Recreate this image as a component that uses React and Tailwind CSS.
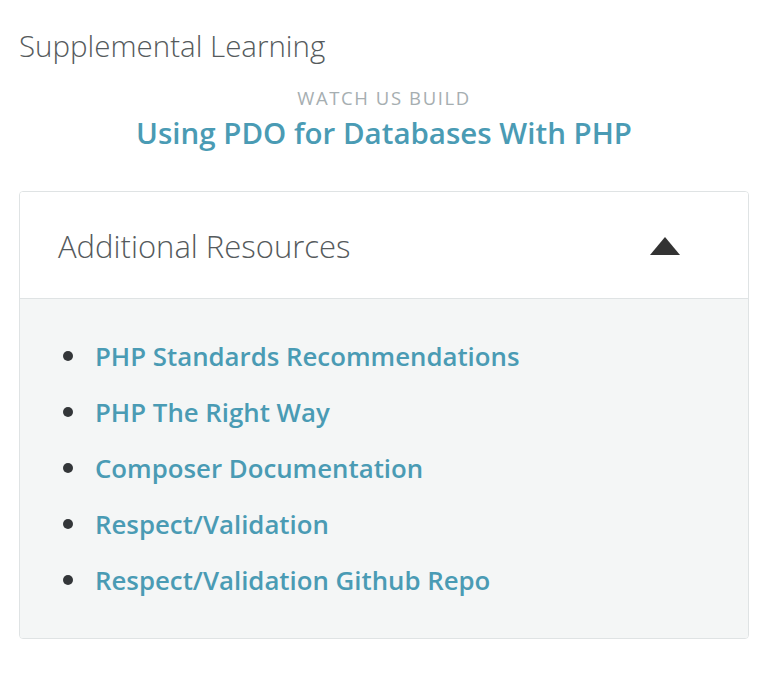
const LINKS = [
  'PHP Standards Recommendations',
  'PHP The Right Way',
  'Composer Documentation',
  'Respect/Validation',
  'Respect/Validation Github Repo',
]

export default function App() {
  return (
    <div className="min-h-[689px] bg-white px-[19px] pt-[27px] font-['Open_Sans',sans-serif]">
      {/* Section title */}
      <h2 className="text-[29.5px] leading-[38px] font-light text-[#555a5c]">Supplemental Learning</h2>

      {/* Watch us build */}
      <div className="mt-[21px] text-center">
        <p className="text-[18.5px] leading-[24px] uppercase tracking-[1.6px] text-[#a6aeb1]">Watch us build</p>
        <a href="#" className="mt-[4px] block text-[29.5px] leading-[38px] font-semibold text-[#4a9bb4]">
          Using PDO for Databases With PHP
        </a>
      </div>

      {/* Resources card */}
      <div className="mt-[39px] border border-[#dfe3e4] rounded-[4px] overflow-hidden">
        <div className="h-[107px] pt-[2px] flex items-center justify-between pl-[38px] pr-[68px] bg-white border-b border-[#dfe3e4]">
          <span className="text-[31px] font-light text-[#555a5c]">Additional Resources</span>
          <svg width="30" height="18" viewBox="0 0 30 18">
            <path d="M15 0 L30 18 L0 18 Z" fill="#333" />
          </svg>
        </div>
        <ul className="bg-[#f4f6f6] pl-[43px] pt-[29px] pb-[30px]">
          {LINKS.map(l => (
            <li key={l} className="flex items-center h-[56px]">
              <span className="w-[10px] h-[10px] rounded-full bg-[#333639]" />
              <a href="#" className="ml-[22px] text-[25.8px] font-semibold text-[#4a9bb4]">{l}</a>
            </li>
          ))}
        </ul>
      </div>
    </div>
  )
}
